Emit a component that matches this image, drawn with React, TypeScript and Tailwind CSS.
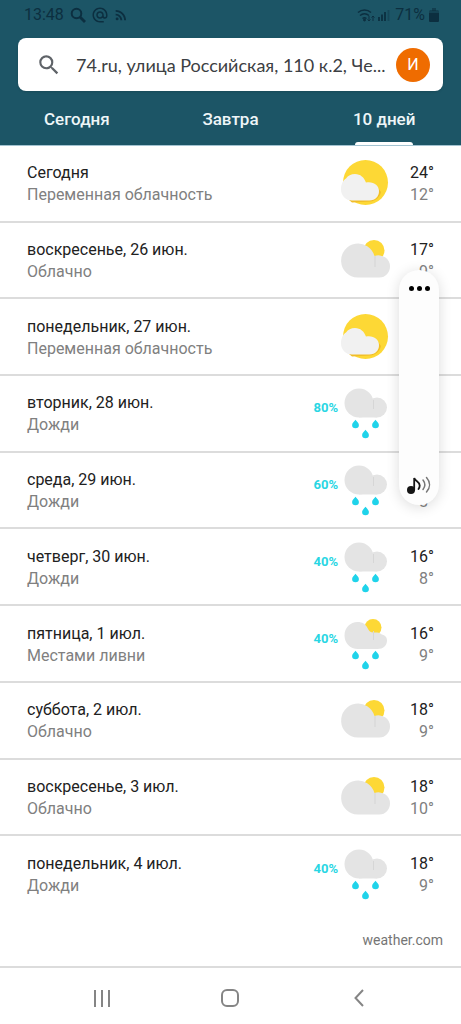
import { MdAlternateEmail, MdRssFeed, MdSearch } from "react-icons/md";

type Sky = "partly" | "cloudy" | "rain" | "showers";

interface Day {
  date: string;
  text: string;
  sky: Sky;
  chance?: string;
  high?: string;
  low?: string;
}

const DAYS: Day[] = [
  { date: "Сегодня", text: "Переменная облачность", sky: "partly", high: "24°", low: "12°" },
  { date: "воскресенье, 26 июн.", text: "Облачно", sky: "cloudy", high: "17°", low: "9°" },
  { date: "понедельник, 27 июн.", text: "Переменная облачность", sky: "partly" },
  { date: "вторник, 28 июн.", text: "Дожди", sky: "rain", chance: "80%" },
  { date: "среда, 29 июн.", text: "Дожди", sky: "rain", chance: "60%", low: "8°" },
  { date: "четверг, 30 июн.", text: "Дожди", sky: "rain", chance: "40%", high: "16°", low: "8°" },
  { date: "пятница, 1 июл.", text: "Местами ливни", sky: "showers", chance: "40%", high: "16°", low: "9°" },
  { date: "суббота, 2 июл.", text: "Облачно", sky: "cloudy", high: "18°", low: "9°" },
  { date: "воскресенье, 3 июл.", text: "Облачно", sky: "cloudy", high: "18°", low: "10°" },
  { date: "понедельник, 4 июл.", text: "Дожди", sky: "rain", chance: "40%", high: "18°", low: "9°" },
];

const TABS = ["Сегодня", "Завтра", "10 дней"];

function Drop({ x, y }: { x: number; y: number }) {
  return (
    <path
      transform={`translate(${x} ${y})`}
      d="M0-4.2C1.2-2.6 3.4-1 3.4 1A3.4 3.2 0 0 1-3.4 1C-3.4-1-1.2-2.6 0-4.2Z"
      fill="#1fd3ea"
    />
  );
}

function RainCloud({ sun }: { sun?: boolean }) {
  return (
    <>
      {sun && <circle cx="33" cy="12.500" r="8.500" fill="#fdd835" />}
      {sun ? (
        <path
          d="M18 34C10 34 4.500 28 4.500 20.500 4.500 12.500 10.500 7 17.500 7c5 0 8 2 10 6 1.500 3 3 4.500 6 4.500 1 0 2 0 3.500 0 2.500 0 4 2 6.500 2.500 2.500 1 3.500 3 3.500 5.500 0 5-4 8.500-9.500 8.500Z"
          fill="#e4e4e4"
        />
      ) : (
        <g fill="#e4e4e4">
          <circle cx="19" cy="19" r="14.500" />
          <circle cx="37" cy="23.500" r="10" />
          <path d="M19 19h18v14.500H19Z" />
        </g>
      )}
      <path d="M33.500 16v9" stroke="#d6d6d6" strokeWidth="1" />
      <Drop x={15.5} y={40} />
      <Drop x={35.5} y={40} />
      <Drop x={25.5} y={50} />
    </>
  );
}

function SkyIcon({ sky }: { sky: Sky }) {
  return (
    <svg viewBox="0 0 51 60" className="h-[60px] w-[51px] shrink-0" aria-hidden="true">
      {sky === "partly" && (
        <>
          <circle cx="25.500" cy="28.500" r="22.500" fill="#fdd835" />
          <path d="M9 46h22c5 0 8-3.500 8-9l-1-3 3 4c-1 5-5 9-11 9.500l-18 1Z" fill="#f1bd28" />
          <path
            d="M12 46.500C5.500 46.500 1 41.500 1 35.500 1 30 3 26.500 6 24.500 8 21.500 11 20 15 20c5.500 0 9 3.500 11 8.500 7-1.500 13 2.500 13 8.500 0 5.500-4 9.500-9.500 9.500Z"
            fill="#f1f1f1"
          />
        </>
      )}
      {sky === "cloudy" && (
        <>
          <circle cx="34" cy="19.500" r="10.500" fill="#fdd835" />
          <path
            d="M17.500 46.500A17 17 0 1 1 34.500 25a11.500 11 0 0 1 15.500 10.500c0 6-4.500 11-10.500 11Z"
            fill="#e4e4e4"
          />
          <path d="M35 25v11" stroke="#d4d4d4" strokeWidth="1" />
        </>
      )}
      {sky === "rain" && <RainCloud />}
      {sky === "showers" && <RainCloud sun />}
    </svg>
  );
}

function StatusBar() {
  return (
    <div className="flex h-[38px] items-start justify-between pt-[5px] pr-[22px] pl-6 text-base leading-5 text-[#0c2f40]">
      <div className="flex items-center gap-1">
        <span>13:48</span>
        <svg viewBox="0 0 18 18" className="ml-px h-[18px] w-[18px]" fill="none" stroke="currentColor" aria-hidden="true">
          <circle cx="7.500" cy="7.500" r="4.800" strokeWidth="2" />
          <path d="M11 11l5 5" strokeWidth="2.800" />
        </svg>
        <MdAlternateEmail className="h-[18px] w-[18px]" />
        <MdRssFeed className="h-4 w-4" />
      </div>
      <div className="flex items-center">
        <svg viewBox="0 0 34 16" className="h-4 w-[34px]" fill="none" stroke="currentColor" aria-hidden="true">
          <path d="M1 5.500a10 10 0 0 1 13 0M3 8.500a7 7 0 0 1 9 0M5.500 11.500a3.500 3.500 0 0 1 4 0" strokeWidth="1.500" />
          <circle cx="7.500" cy="13" r="1" fill="currentColor" />
          <path d="M12 9v5m-1.500-1.500L12 14l1.500-1.500M16 14V9m-1.500 1.500L16 9l1.500 1.500" strokeWidth="1" />
          <path d="M22 14v-4M25 14V7.500M28 14V5" strokeWidth="1.800" />
          <path d="M31.500 14V3" strokeWidth="1.800" opacity=".4" />
        </svg>
        <span className="ml-1">71%</span>
        <svg viewBox="0 0 10 14" className="ml-1 h-[14px] w-[10px]" fill="currentColor" aria-hidden="true">
          <rect x="3" y="0" width="4" height="3" opacity=".6" />
          <rect x="0" y="2" width="10" height="12" rx="1.500" opacity=".5" />
          <path d="M0 5h10v7.500a1.500 1.500 0 0 1-1.500 1.500h-7A1.500 1.500 0 0 1 0 12.500Z" />
        </svg>
      </div>
    </div>
  );
}

function Header() {
  return (
    <header className="border-b border-[#a3c3d1] bg-[#1c5566]">
      <StatusBar />
      <div className="mx-[18px] flex h-[53px] items-center rounded-lg bg-white pr-[13px] pl-[18px] shadow-sm">
        <MdSearch className="h-[26px] w-[26px] shrink-0 text-[#5f6368]" />
        <input
          type="text"
          aria-label="Поиск"
          defaultValue="74.ru, улица Российская, 110 к.2, Че..."
          className="ml-[14px] min-w-0 flex-1 bg-transparent font-[Lato,Roboto,sans-serif] text-lg text-[#3c4043] outline-none"
        />
        <button className="h-[34px] w-[34px] shrink-0 rounded-full bg-[#ef6c00] text-base text-white">И</button>
      </div>
      <nav className="grid h-[54px] grid-cols-3">
        {TABS.map((tab, i) => (
          <button key={tab} className="flex flex-col items-center justify-between text-[17px] font-medium text-[#eef6f8]">
            <span className="pt-4 leading-6">{tab}</span>
            {i === 2 && <span className="h-[3px] w-[58px] rounded-t bg-white" />}
          </button>
        ))}
      </nav>
    </header>
  );
}

function DayRow({ day }: { day: Day }) {
  return (
    <li className="flex items-center border-b-2 border-[#dcdcdc] px-[27px] pt-0.5 text-base leading-[22px] last:border-transparent">
      <div className="min-w-0 flex-1">
        <p className="text-[#212121]">{day.date}</p>
        <p className="text-[#808080]">{day.text}</p>
      </div>
      {day.chance && <span className="pr-[2px] pb-3 text-[13px] font-bold text-[#29d6e3]">{day.chance}</span>}
      <SkyIcon sky={day.sky} />
      <div className="w-[43px] text-right">
        <p className="h-[22px] text-[#212121]">{day.high}</p>
        <p className="h-[22px] text-[#808080]">{day.low}</p>
      </div>
    </li>
  );
}

function VolumePanel() {
  return (
    <div className="absolute top-[270px] right-[22px] flex h-[235px] w-10 flex-col items-center justify-between rounded-full bg-[#fdfdfd] pt-4 pb-2 shadow-[0_2px_14px_rgba(0,0,0,0.14)]">
      <button aria-label="Ещё" className="flex gap-[3px]">
        <span className="h-[5px] w-[5px] rounded-full bg-black" />
        <span className="h-[5px] w-[5px] rounded-full bg-black" />
        <span className="h-[5px] w-[5px] rounded-full bg-black" />
      </button>
      <button aria-label="Звук">
        <svg viewBox="0 0 26 24" className="h-6 w-[26px]" fill="none" strokeLinecap="round">
          <circle cx="5" cy="17" r="4" fill="#151515" />
          <path d="M8.200 17V5c1 3.500 5.500 3.500 5.500 7.500 0 1.500-.5 2.500-1.200 3.500" stroke="#151515" strokeWidth="1.800" />
          <path d="M17 7c2.300 3 2.300 6.500 0 9.500" stroke="#777" strokeWidth="1.500" />
          <path d="M20.500 4.500c4 4.500 4 10 0 14.500" stroke="#777" strokeWidth="1.500" />
        </svg>
      </button>
    </div>
  );
}

function SystemNav() {
  return (
    <nav className="grid h-[58px] grid-cols-3 items-center border-t-2 border-[#dcdcdc] px-[38px] pt-1 text-[#858585]">
      <button aria-label="Недавние" className="mx-auto flex gap-[5px]">
        <span className="h-[17px] w-[2px] bg-current" />
        <span className="h-[17px] w-[2px] bg-current" />
        <span className="h-[17px] w-[2px] bg-current" />
      </button>
      <button aria-label="Домой" className="mx-auto h-[18px] w-[18px] rounded-md border-2 border-current" />
      <button aria-label="Назад" className="mx-auto">
        <svg viewBox="0 0 10 18" className="h-[18px] w-[10px]" fill="none" stroke="currentColor" strokeWidth="2">
          <path d="M9 1L1.500 9 9 17" />
        </svg>
      </button>
    </nav>
  );
}

function App() {
  return (
    <div className="relative flex min-h-screen flex-col bg-white font-[Roboto,sans-serif]">
      <Header />
      <ul className="grid flex-1 auto-rows-fr">
        {DAYS.map((day) => (
          <DayRow key={day.date} day={day} />
        ))}
      </ul>
      <div className="flex h-[53px] items-center justify-end pr-[18px]">
        <a href="#weather" className="text-sm text-[#757575]">
          weather.com
        </a>
      </div>
      <SystemNav />
      <VolumePanel />
    </div>
  );
}

export default App;
